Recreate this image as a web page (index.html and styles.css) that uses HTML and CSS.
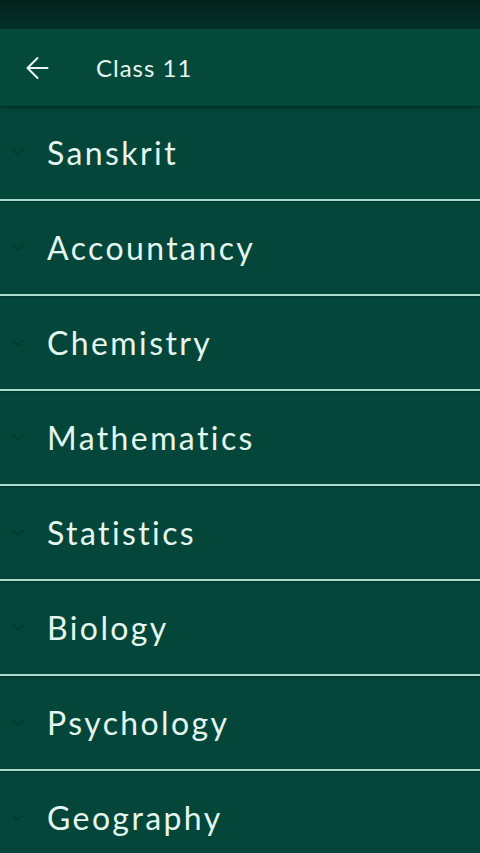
FILE: index.html
```html
<!DOCTYPE html>
<html>
<head>
<meta charset="utf-8">
<link rel="stylesheet" href="styles.css">
</head>
<body>
<div class="status"></div>
<header class="bar">
  <svg class="back" viewBox="0 0 24 24"><path d="M22.5 12H2.5M12.5 2l-10 10 10 10" fill="none" stroke="#e8f7f1" stroke-width="2" stroke-linecap="round" stroke-linejoin="round"/></svg>
  <span class="title">Class 11</span>
</header>
<ul class="list">
  <li class="row"><svg class="chev" viewBox="0 0 16 10"><path d="M2 2l6 6 6-6" fill="none" stroke="#033a2e" stroke-width="2"/></svg><span>Sanskrit</span></li>
  <li class="row"><svg class="chev" viewBox="0 0 16 10"><path d="M2 2l6 6 6-6" fill="none" stroke="#033a2e" stroke-width="2"/></svg><span>Accountancy</span></li>
  <li class="row"><svg class="chev" viewBox="0 0 16 10"><path d="M2 2l6 6 6-6" fill="none" stroke="#033a2e" stroke-width="2"/></svg><span>Chemistry</span></li>
  <li class="row"><svg class="chev" viewBox="0 0 16 10"><path d="M2 2l6 6 6-6" fill="none" stroke="#033a2e" stroke-width="2"/></svg><span>Mathematics</span></li>
  <li class="row"><svg class="chev" viewBox="0 0 16 10"><path d="M2 2l6 6 6-6" fill="none" stroke="#033a2e" stroke-width="2"/></svg><span>Statistics</span></li>
  <li class="row"><svg class="chev" viewBox="0 0 16 10"><path d="M2 2l6 6 6-6" fill="none" stroke="#033a2e" stroke-width="2"/></svg><span>Biology</span></li>
  <li class="row"><svg class="chev" viewBox="0 0 16 10"><path d="M2 2l6 6 6-6" fill="none" stroke="#033a2e" stroke-width="2"/></svg><span>Psychology</span></li>
  <li class="row"><svg class="chev" viewBox="0 0 16 10"><path d="M2 2l6 6 6-6" fill="none" stroke="#033a2e" stroke-width="2"/></svg><span>Geography</span></li>
</ul>
</body>
</html>
```
FILE: styles.css
```css
html, body {
  margin: 0;
  padding: 0;
  background: #04463a;
  font-family: Lato, "Open Sans", sans-serif;
  color: #e3f6ef;
  height: 853px;
  overflow: hidden;
}
.status {
  height: 29px;
  background: linear-gradient(#01221b, #03302a);
}
.bar {
  height: 77px;
  background: #05493b;
  display: flex;
  align-items: center;
  padding-left: 25px;
  box-shadow: 0 2px 3px rgba(0,0,0,0.35);
  position: relative;
  z-index: 1;
}
.back {
  width: 24px;
  height: 24px;
}
.title {
  margin-left: 47px;
  font-size: 24px;
  letter-spacing: 1px;
}
.list {
  list-style: none;
  margin: 0;
  padding: 0;
}
.row {
  height: 93px;
  border-bottom: 2px solid #a9dccb;
  display: flex;
  align-items: center;
  background: #04463a;
  box-shadow: inset 0 3px 2px -2px rgba(0,0,0,0.25);
}
.row:first-child { box-shadow: none; }
.chev {
  width: 14px;
  height: 9px;
  margin-left: 11px;
  margin-right: 22px;
}
.row span {
  font-size: 32px;
  letter-spacing: 2.4px;
}
```
